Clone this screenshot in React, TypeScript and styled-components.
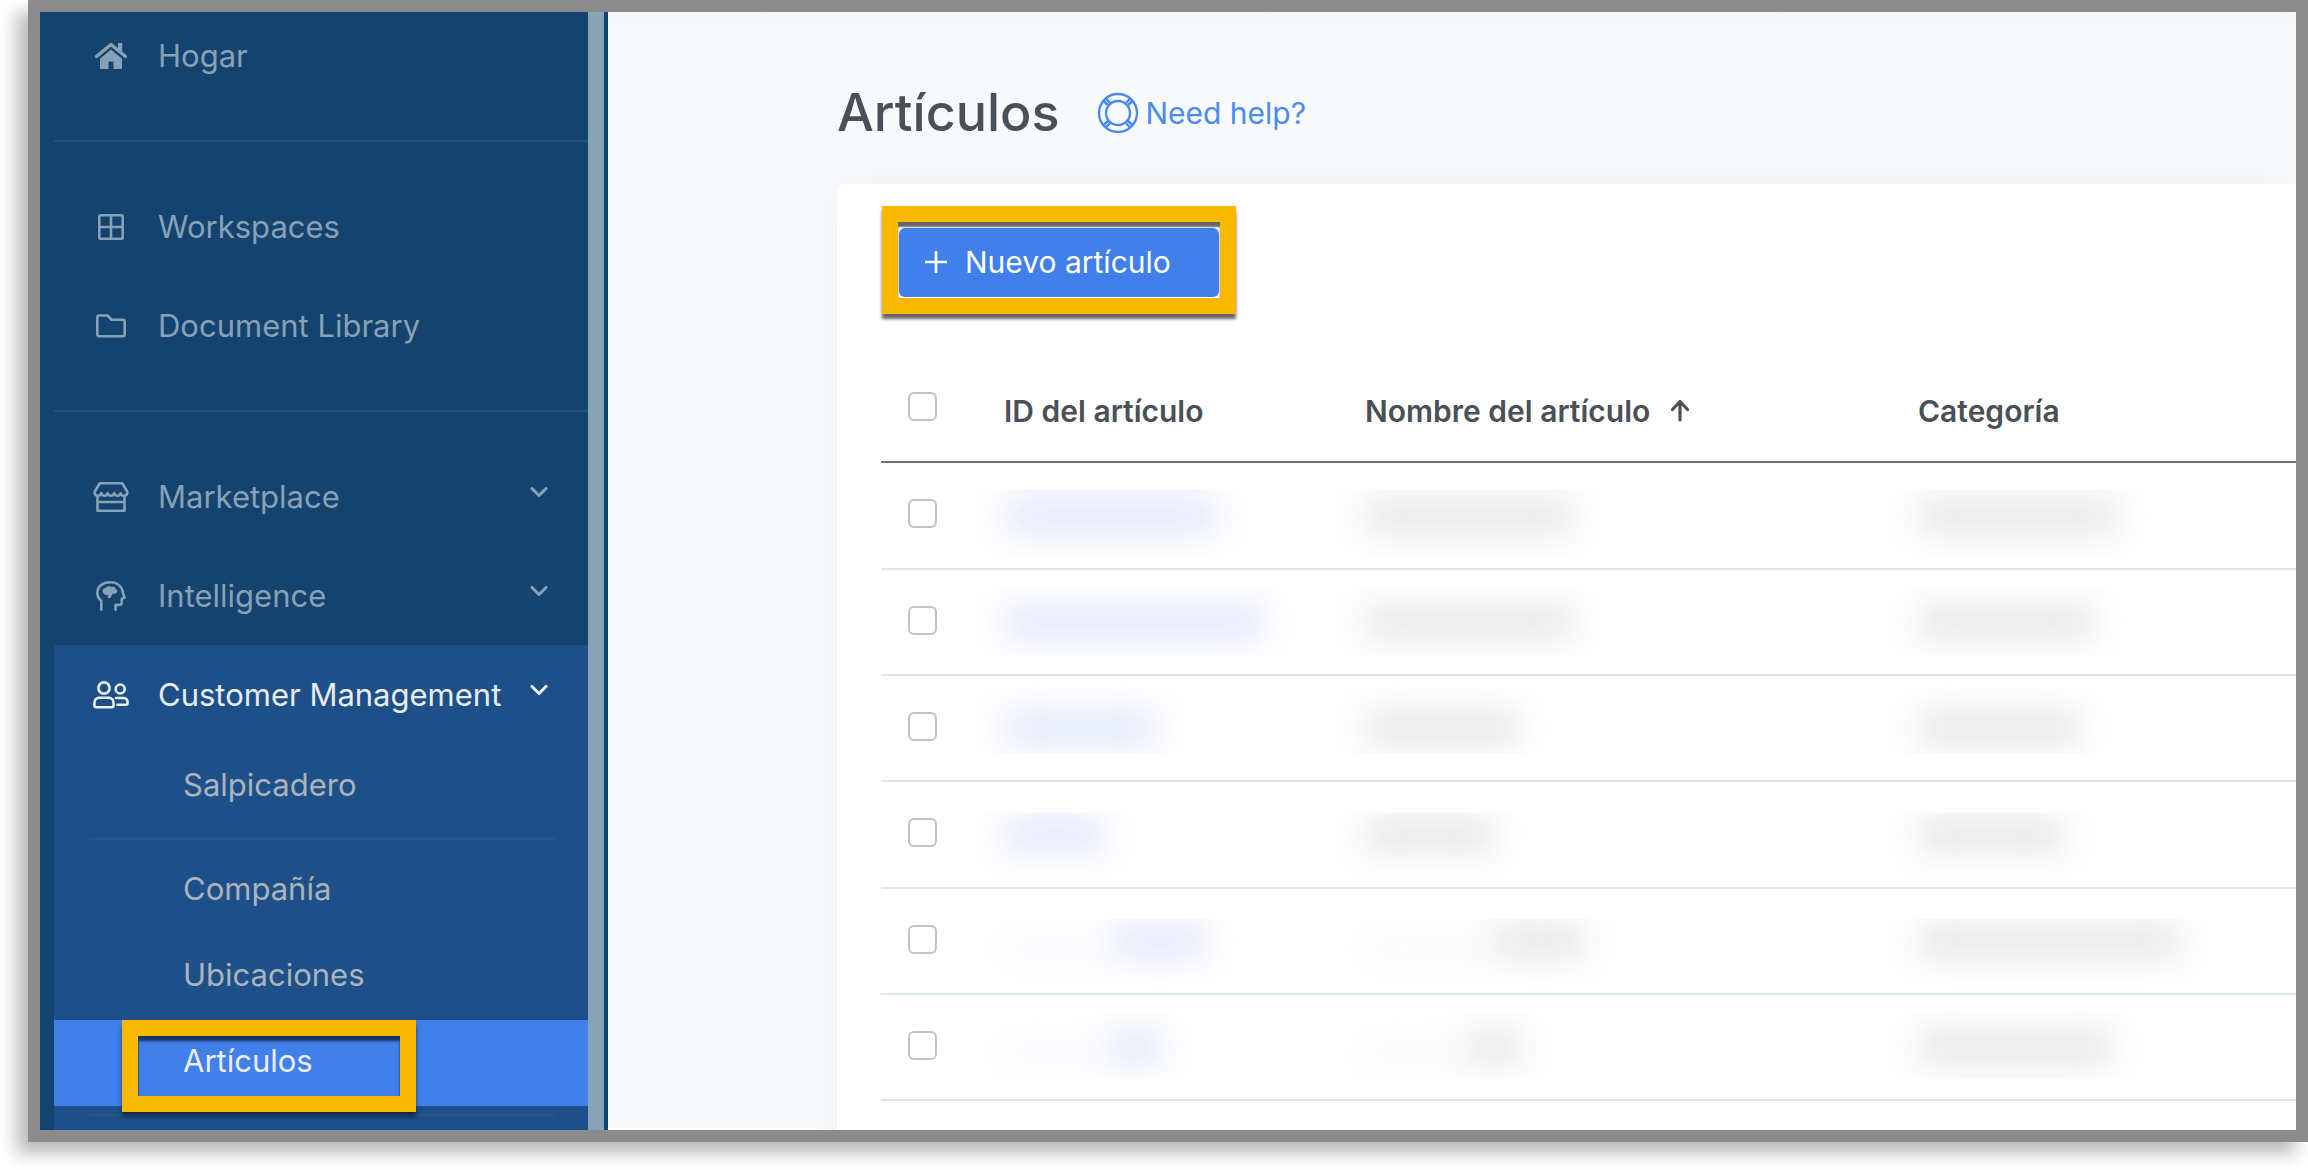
import React from "react";
import styled, { createGlobalStyle, css } from "styled-components";

const Global = createGlobalStyle`
  * { box-sizing: border-box; }
  body { margin: 0; background: #ffffff; font-family: Inter, "Open Sans", sans-serif; }
`;

const Page = styled.div`
  display: flex;
  height: 100vh;
  padding: 0 0 28px 28px;
  overflow: hidden;
`;

const Frame = styled.div`
  flex: 1;
  min-width: 0;
  display: flex;
  border: 12px solid #8b8b8b;
  box-shadow: -12px 12px 16px rgba(0, 0, 0, 0.26);
`;

const Sidebar = styled.nav`
  flex: none;
  width: 568px;
  display: flex;
  overflow: hidden;
  background: #144370;
  padding: 0 4px 0 14px;
`;

const NavScroll = styled.div`
  flex: 1;
  min-width: 0;
  margin-top: -6px;
`;

const ScrollTrack = styled.div`
  flex: none;
  width: 16px;
  background: #89a3b6;
`;

const Rule = styled.hr<{ $inset?: boolean }>`
  height: 2px;
  border: 0;
  margin: ${(p) => (p.$inset ? "8px 33px 8px 35px" : "35px 0")};
  background: ${(p) => (p.$inset ? "#25588a" : "#234f78")};
`;

const NavItem = styled.a<{ $active?: boolean }>`
  display: flex;
  align-items: center;
  gap: 29px;
  height: 99px;
  padding: 0 40px 0 39px;
  font-size: 31px;
  line-height: 40px;
  white-space: nowrap;
  text-decoration: none;
  color: ${(p) => (p.$active ? "#e9edf1" : "#87a1b6")};
  svg { flex: none; }
`;

const NavLabel = styled.span`
  flex: 1;
  min-width: 0;
`;

const ChevronBox = styled.span`
  display: flex;
  padding-bottom: 10px;
  margin-left: -29px;
`;

const Group = styled.div`
  background: #1d5089;
`;

const SubItem = styled.a<{ $current?: boolean }>`
  position: relative;
  display: flex;
  align-items: center;
  height: 86px;
  padding: 0 40px 4px 129px;
  font-size: 31px;
  line-height: 40px;
  text-decoration: none;
  color: ${(p) => (p.$current ? "#e9edf1" : "#abb4bb")};
  background: ${(p) => (p.$current ? "#4180ea" : "transparent")};
`;

const Highlight = styled.span<{ $place: "nav" | "button" }>`
  position: absolute;
  z-index: 1;
  border: 16px solid #fbb800;
  pointer-events: none;
  ${(p) =>
    p.$place === "nav"
      ? css`
          top: 0;
          bottom: -6px;
          left: 68px;
          width: 294px;
          box-shadow: 0 5px 4px rgba(10, 25, 50, 0.65), inset 0 5px 3px rgba(10, 25, 50, 0.75);
        `
      : css`
          inset: -22px -17px -17px -17px;
          box-shadow: 0 5px 3px rgba(0, 0, 0, 0.6), inset 0 5px 2px rgba(0, 0, 0, 0.6);
        `}
`;

const Main = styled.main`
  flex: 1;
  min-width: 0;
  overflow: hidden;
  padding: 58px 0 0 229px;
  background: linear-gradient(#f5f6f9, #f9fafe 50px);
`;

const Header = styled.header`
  display: flex;
  align-items: center;
  gap: 38px;
  height: 86px;
  margin-bottom: 28px;
`;

const Title = styled.h1`
  margin: 0;
  font-size: 52px;
  line-height: 64px;
  font-weight: 500;
  color: #495057;
`;

const Help = styled.a`
  display: flex;
  align-items: center;
  gap: 6px;
  font-size: 30px;
  line-height: 40px;
  color: #4a8af4;
  text-decoration: none;
`;

const Card = styled.section`
  min-height: 100%;
  padding: 44px 0 0 44px;
  border-radius: 8px 0 0 0;
  background: #ffffff;
  box-shadow: 0 0 40px rgba(0, 0, 0, 0.05);
`;

const Toolbar = styled.div`
  display: flex;
  padding-left: 18px;
  margin-bottom: 61px;
`;

const ButtonWrap = styled.div`
  position: relative;
`;

const NewButton = styled.button`
  display: flex;
  align-items: center;
  gap: 18px;
  width: 320px;
  height: 69px;
  padding: 0 26px 2px;
  border: 0;
  border-radius: 6px;
  background: #4180ea;
  color: #ffffff;
  font: 400 30px/40px Inter, "Open Sans", sans-serif;
  white-space: nowrap;
`;

const Check = styled.input`
  appearance: none;
  display: block;
  width: 29px;
  height: 29px;
  margin: 0 0 4px 27px;
  border: 2px solid #c3c3c3;
  border-radius: 6px;
  background: #ffffff;
`;

const Table = styled.table`
  width: 100%;
  table-layout: fixed;
  border-collapse: separate;
  border-spacing: 0;
`;

const Th = styled.th<{ $width?: number }>`
  width: ${(p) => (p.$width ? p.$width + "px" : "auto")};
  height: 105px;
  padding: 3px 0 0;
  border-bottom: 2px solid #6a757d;
  text-align: left;
  font-size: 30px;
  line-height: 40px;
  font-weight: 600;
  color: #495057;
  white-space: nowrap;
  svg { margin-left: 20px; }
  ${Check} { margin-bottom: 10px; }
`;

const Td = styled.td`
  height: 106px;
  padding: 0;
  border-bottom: 2px solid #dde6ee;
  tr:nth-child(3n + 1) > & { height: 107px; }
`;

const Redacted = styled.div<{ $up: number }>`
  display: flex;
  align-items: center;
  height: 104px;
  margin-left: -32px;
  padding-left: 32px;
  clip-path: inset(${(p) => 52 - p.$up}px 0 ${(p) => p.$up - 16}px 0);
`;

const Smudge = styled.span<{ $width: number; $tone: "link" | "text"; $faint?: boolean }>`
  width: ${(p) => p.$width}px;
  height: ${(p) => (p.$faint ? 12 : 32)}px;
  margin-top: ${(p) => (p.$faint ? 14 : 0)}px;
  background: ${(p) => (p.$tone === "link" ? "#e0e5fb" : "#e3e5e4")};
  opacity: ${(p) => (p.$faint ? 0.4 : 1)};
  filter: blur(17px);
`;

const stroke = {
  fill: "none",
  stroke: "currentColor",
  strokeWidth: 2.6,
  strokeLinecap: "round" as const,
  strokeLinejoin: "round" as const,
};

const HomeIcon = () => (
  <svg width="36" height="32" viewBox="0 0 36 32" aria-hidden="true">
    <path d="M3.500 16.500 18 4.500 32.500 16.500" {...stroke} strokeWidth="3.400" />
    <path d="M25 3h4.200v9.500L25 9z" fill="currentColor" />
    <path d="M18 9.500 29 18.800V28a1 1 0 0 1-1 1h-7.500v-7.500h-5V29H8a1 1 0 0 1-1-1v-9.200z" fill="currentColor" />
  </svg>
);

const GridIcon = () => (
  <svg width="36" height="32" viewBox="0 0 36 32" aria-hidden="true">
    <rect x="6.300" y="4.300" width="23.400" height="23.400" rx="1.500" {...stroke} />
    <path d="M18 4.500v23M6.500 16h23" {...stroke} />
  </svg>
);

const FolderIcon = () => (
  <svg width="36" height="32" viewBox="0 0 36 32" aria-hidden="true">
    <path d="M4.300 7.500a2 2 0 0 1 2-2h8.200l4 4.200h11.200a2 2 0 0 1 2 2v12.500a2 2 0 0 1-2 2H6.300a2 2 0 0 1-2-2z" {...stroke} />
  </svg>
);

const StoreIcon = () => (
  <svg width="36" height="32" viewBox="0 0 36 32" aria-hidden="true">
    <path d="M6.800 2.300h22.400l5 8.200c.6 2.500-1 4.300-3.200 4.300-2 0-3-1.200-3.300-2.600-.4 1.400-1.500 2.600-3.200 2.600s-2.900-1.200-3.300-2.600c-.4 1.400-1.500 2.600-3.200 2.600s-2.900-1.200-3.300-2.600c-.4 1.400-1.500 2.600-3.200 2.600s-2.900-1.200-3.300-2.600c-.4 1.400-1.400 2.600-3.300 2.600-2.200 0-3.800-1.800-3.100-4.300z" {...stroke} />
    <path d="M4.500 15v14.800h27V15M4.500 21h27" {...stroke} />
  </svg>
);

const HeadIcon = () => (
  <svg width="36" height="32" viewBox="0 0 36 32" aria-hidden="true">
    <path d="M8.300 29.800v-9C5.500 18.500 4.300 16 4.300 12.800 4.300 6.500 9.500 2.300 17 2.300c7.800 0 12.500 4.500 13 11l1.700 4.200-2.900 1.200v3.500c0 1.800-1 2.700-2.700 2.700h-3.600v4.900" {...stroke} />
    <path d="M10 12.500c-1-2.500.5-4.500 2.600-4.500 1-2 4-2.500 5.600-1 2.300-.7 4 .3 4.400 2 2 .6 2.400 2.800.8 4-1.400 1-3 .6-4 .9l-2 4.200h-2.600v-3.400c-2 .6-4.300-.2-4.800-2.200z" fill="currentColor" />
  </svg>
);

const PeopleIcon = () => (
  <svg width="36" height="32" viewBox="0 0 36 32" aria-hidden="true">
    <circle cx="11" cy="9" r="5.600" {...stroke} />
    <path d="M1.400 26.500v-2.300c0-3.300 2-5.500 5-5.500h9.200c3 0 5 2.200 5 5.500v2.300a1.700 1.700 0 0 1-1.700 1.700H3.100a1.700 1.700 0 0 1-1.700-1.700z" {...stroke} />
    <circle cx="27.200" cy="10" r="4.500" {...stroke} />
    <path d="M23 19h7c2.800 0 4.600 1.800 4.600 4.400v.8a1.500 1.500 0 0 1-1.500 1.500H24.500" {...stroke} />
  </svg>
);

const Chevron = () => (
  <svg width="18" height="12" viewBox="0 0 18 12" aria-hidden="true">
    <path d="M2 2.500 9 9.500 16 2.500" {...stroke} strokeWidth="3.100" />
  </svg>
);

const LifeRing = () => (
  <svg width="42" height="42" viewBox="0 0 42 42" aria-hidden="true">
    <g {...stroke} strokeWidth="2.400">
      <circle cx="21" cy="21" r="19" />
      <circle cx="21" cy="21" r="12" />
      <path d="M6.500 9l5 4.500M9 6.500l4.500 5M33 6.500l-4.500 5M35.500 9l-5 4.500M6.500 33l5-4.500M9 35.500l4.500-5M33 35.500l-4.500-5M35.500 33l-5-4.500" />
    </g>
  </svg>
);

const PlusIcon = () => (
  <svg width="22" height="24" viewBox="0 0 22 24" aria-hidden="true">
    <path d="M11 1v22M0 12h22" fill="none" stroke="currentColor" strokeWidth="2.600" />
  </svg>
);

const SortArrow = () => (
  <svg width="20" height="23" viewBox="0 0 20 23" aria-hidden="true">
    <path d="M10 21V3M2.500 10.500 10 2.500l7.500 8" {...stroke} strokeWidth="3.200" />
  </svg>
);

type Bar = { width: number; faint?: boolean };
const rows: { up: number; id: Bar[]; name: Bar[]; category: Bar[] }[] = [
  { up: 26, id: [{ width: 214 }], name: [{ width: 208 }], category: [{ width: 200 }] },
  { up: 34, id: [{ width: 260 }], name: [{ width: 208 }], category: [{ width: 176 }] },
  { up: 42, id: [{ width: 152 }], name: [{ width: 154 }], category: [{ width: 162 }] },
  { up: 22, id: [{ width: 100 }], name: [{ width: 130 }], category: [{ width: 146 }] },
  {
    up: 22,
    id: [{ width: 110, faint: true }, { width: 92 }],
    name: [{ width: 128, faint: true }, { width: 92 }],
    category: [{ width: 262 }],
  },
  {
    up: 36,
    id: [{ width: 106, faint: true }, { width: 52 }],
    name: [{ width: 104, faint: true }, { width: 52 }],
    category: [{ width: 194 }],
  },
];

const Hidden = ({ bars, tone, up }: { bars: Bar[]; tone: "link" | "text"; up: number }) => (
  <Redacted $up={up}>
    {bars.map((bar, i) => (
      <Smudge key={i} $width={bar.width} $tone={tone} $faint={bar.faint} />
    ))}
  </Redacted>
);

const App = () => (
  <>
    <Global />
    <Page>
      <Frame>
        <Sidebar>
          <NavScroll>
            <NavItem href="#hogar"><HomeIcon /><NavLabel>Hogar</NavLabel></NavItem>
            <Rule />
            <NavItem href="#workspaces"><GridIcon /><NavLabel>Workspaces</NavLabel></NavItem>
            <NavItem href="#library"><FolderIcon /><NavLabel>Document Library</NavLabel></NavItem>
            <Rule />
            <NavItem href="#marketplace">
              <StoreIcon /><NavLabel>Marketplace</NavLabel><ChevronBox><Chevron /></ChevronBox>
            </NavItem>
            <NavItem href="#intelligence">
              <HeadIcon /><NavLabel>Intelligence</NavLabel><ChevronBox><Chevron /></ChevronBox>
            </NavItem>
            <Group>
              <NavItem href="#customers" $active>
                <PeopleIcon /><NavLabel>Customer Management</NavLabel><ChevronBox><Chevron /></ChevronBox>
              </NavItem>
              <SubItem href="#salpicadero">Salpicadero</SubItem>
              <Rule $inset />
              <SubItem href="#compania">Compañía</SubItem>
              <SubItem href="#ubicaciones">Ubicaciones</SubItem>
              <SubItem href="#articulos" $current>
                Artículos
                <Highlight $place="nav" />
              </SubItem>
              <Rule $inset />
              <SubItem href="#mas" aria-hidden="true" />
            </Group>
          </NavScroll>
          <ScrollTrack />
        </Sidebar>
        <Main>
          <Header>
            <Title>Artículos</Title>
            <Help href="#help"><LifeRing />Need help?</Help>
          </Header>
          <Card>
            <Toolbar>
              <ButtonWrap>
                <NewButton type="button"><PlusIcon />Nuevo artículo</NewButton>
                <Highlight $place="button" />
              </ButtonWrap>
            </Toolbar>
            <Table>
              <thead>
                <tr>
                  <Th $width={123}><Check type="checkbox" aria-label="Seleccionar todo" /></Th>
                  <Th $width={361}>ID del artículo</Th>
                  <Th $width={553}>Nombre del artículo<SortArrow /></Th>
                  <Th>Categoría</Th>
                </tr>
              </thead>
              <tbody>
                {rows.map((row, i) => (
                  <tr key={i}>
                    <Td><Check type="checkbox" aria-label={`Seleccionar fila ${i + 1}`} /></Td>
                    <Td><Hidden bars={row.id} tone="link" up={row.up} /></Td>
                    <Td><Hidden bars={row.name} tone="text" up={row.up} /></Td>
                    <Td><Hidden bars={row.category} tone="text" up={row.up} /></Td>
                  </tr>
                ))}
              </tbody>
            </Table>
          </Card>
        </Main>
      </Frame>
    </Page>
  </>
);

export default App;
